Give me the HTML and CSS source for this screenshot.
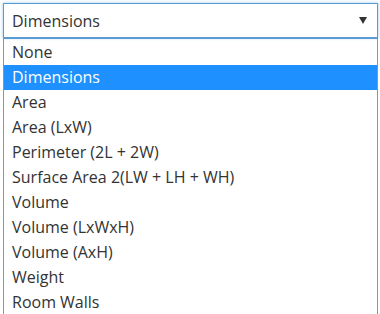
FILE: index.html
```html
<!DOCTYPE html>
<html>
<head>
<meta charset="utf-8">
<link rel="stylesheet" href="styles.css">
</head>
<body>
<div class="wrap">
  <div class="select">
    <span class="value">Dimensions</span>
    <span class="arrow"></span>
  </div>
  <ul class="list">
    <li>None</li>
    <li class="selected">Dimensions</li>
    <li>Area</li>
    <li>Area (LxW)</li>
    <li>Perimeter (2L + 2W)</li>
    <li>Surface Area 2(LW + LH + WH)</li>
    <li>Volume</li>
    <li>Volume (LxWxH)</li>
    <li>Volume (AxH)</li>
    <li>Weight</li>
    <li>Room Walls</li>
  </ul>
</div>
</body>
</html>
```
FILE: styles.css
```css
html, body {
  margin: 0;
  padding: 0;
  background: #ffffff;
}
body {
  font-family: "Open Sans", "Noto Sans", sans-serif;
  font-size: 16px;
  color: #333333;
  overflow: hidden;
}
.wrap {
  padding: 3px 2px 0 3px;
}
.select {
  height: 33px;
  border: 1px solid #5b9bd5;
  box-shadow: 0 0 3px rgba(102, 175, 233, 0.7);
  display: flex;
  align-items: center;
  justify-content: space-between;
  padding: 0 8px 0 8px;
  background: #fff;
}
.arrow {
  width: 0;
  height: 0;
  border-left: 4px solid transparent;
  border-right: 4px solid transparent;
  border-top: 7px solid #333;
  margin-right: 2px;
}
.list {
  list-style: none;
  margin: 0;
  padding: 1px 0 0 0;
  border-left: 1px solid #7f93c9;
  border-right: 1px solid #7f93c9;
  border-top: 1px solid #5b9bd5;
}
.list li {
  height: 25px;
  line-height: 25px;
  padding-left: 8px;
  white-space: nowrap;
}
.list li.selected {
  background: #1e90ff;
  color: #ffffff;
}
```
